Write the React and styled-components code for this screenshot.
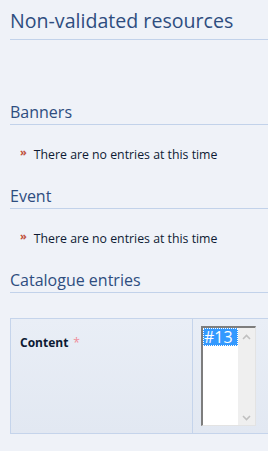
import styled, { createGlobalStyle } from "styled-components";

const GlobalStyle = createGlobalStyle`
  html, body {
    margin: 0;
    padding: 0;
    background: #eff2f8;
    overflow: hidden;
  }
  body {
    font-family: "Open Sans", "Noto Sans", sans-serif;
    color: #0d1a33;
  }
`;

const Page = styled.div`
  padding: 0 0 0 10px;
`;

const Title = styled.h1`
  margin: 0;
  padding: 8px 0 5px;
  font-size: 19.6px;
  font-weight: 400;
  line-height: 26px;
  color: #2e4d7f;
  border-bottom: 1px solid #c2d2ea;
  white-space: nowrap;
`;

const Section = styled.section`
  margin-top: ${(p) => p.$top}px;
`;

const Heading = styled.h2`
  margin: 0;
  padding: 2px 0 1px;
  font-size: 16px;
  font-weight: 400;
  line-height: 21px;
  color: #2e4d7f;
  border-bottom: 1px solid #c2d2ea;
`;

const Notice = styled.p`
  margin: 0;
  padding: 20px 0 0 10px;
  display: flex;
  align-items: flex-start;
  gap: 7px;
  font-size: 12.3px;
  line-height: 20px;
  height: 39px;
`;

const Bullet = styled.span`
  color: #c0503b;
  font-size: 11px;
  font-weight: 700;
  line-height: 14px;
`;

const FormTable = styled.div`
  margin-top: 25px;
  height: 114px;
  display: grid;
  grid-template-columns: 182px 1fr;
  border: 1px solid #c5d4eb;
  border-right: none;
  background: linear-gradient(#e9eef6, #e2e8f2);
`;

const LabelCell = styled.div`
  padding: 15px 0 0 9px;
  border-right: 1px solid #c5d4eb;
  font-size: 12px;
  font-weight: 700;
  color: #0d1a33;
`;

const Required = styled.span`
  color: #f08c98;
  margin-left: 5px;
  font-weight: 400;
`;

const ValueCell = styled.div`
  padding: 7px 0 0 8px;
`;

const ListBox = styled.div`
  width: 55px;
  height: 100px;
  box-sizing: border-box;
  display: flex;
  border-top: 2px solid #7d7d7d;
  border-left: 2px solid #7d7d7d;
  border-right: 1px solid #e3e3e3;
  border-bottom: 1px solid #e3e3e3;
  background: #fff;
`;

const Options = styled.div`
  flex: 1;
`;

const Option = styled.div`
  background: #3399ff;
  color: #fff;
  font-size: 16px;
  line-height: 18px;
  padding: 0 1px;
  outline: 1px dotted #fff;
  outline-offset: -1px;
`;

const ScrollBar = styled.div`
  width: 17px;
  background: #efefef;
  display: flex;
  flex-direction: column;
  justify-content: space-between;
  align-items: center;
  padding: 6px 0 4px;
  color: #c0c0c0;
`;

function Arrow({ up }) {
  return (
    <svg width="9" height="6" viewBox="0 0 9 6">
      <path
        d={up ? "M1 5 L4.5 1.5 L8 5" : "M1 1 L4.5 4.5 L8 1"}
        fill="none"
        stroke="currentColor"
        strokeWidth="1.6"
      />
    </svg>
  );
}

export default function App() {
  return (
    <>
      <GlobalStyle />
      <Page>
        <Title>Non-validated resources</Title>
        <Section $top={60}>
          <Heading>Banners</Heading>
          <Notice>
            <Bullet>»</Bullet>
            There are no entries at this time
          </Notice>
        </Section>
        <Section $top={0}>
          <Heading>Event</Heading>
          <Notice>
            <Bullet>»</Bullet>
            There are no entries at this time
          </Notice>
        </Section>
        <Section $top={0}>
          <Heading>Catalogue entries</Heading>
          <FormTable>
            <LabelCell>
              Content<Required>*</Required>
            </LabelCell>
            <ValueCell>
              <ListBox>
                <Options>
                  <Option>#13</Option>
                </Options>
                <ScrollBar>
                  <Arrow up />
                  <Arrow />
                </ScrollBar>
              </ListBox>
            </ValueCell>
          </FormTable>
        </Section>
      </Page>
    </>
  );
}
